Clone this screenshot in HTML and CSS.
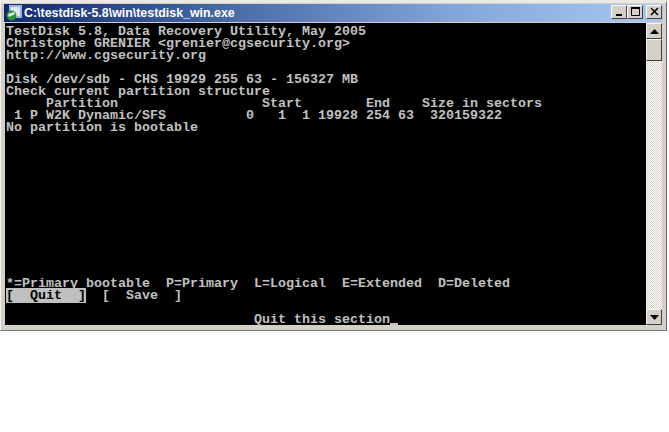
FILE: index.html
```html
<!DOCTYPE html>
<html>
<head>
<meta charset="utf-8">
<title>testdisk_win</title>
<link rel="stylesheet" href="styles.css">
</head>
<body>
<div class="window">
  <div class="titlebar">
    <svg class="appicon" width="16" height="16" viewBox="0 0 16 16">
      <rect x="3" y="0" width="13" height="13" fill="#9fb4cf"/>
      <rect x="5" y="2" width="9" height="9" fill="#dfe8f2"/>
      <circle cx="5.5" cy="10.5" r="5" fill="#2f8f3a"/>
      <path d="M2 9l6-2 1 2-6 3z" fill="#e8f3e0"/>
    </svg>
    <span class="title">C:\testdisk-5.8\win\testdisk_win.exe</span>
    <div class="controls">
      <button class="ctl"><svg width="13" height="12" viewBox="0 0 13 12"><rect x="3" y="8" width="6" height="2" fill="#000"/></svg></button>
      <button class="ctl"><svg width="13" height="12" viewBox="0 0 13 12"><path d="M2.5 1.5h8v8h-8z" fill="none" stroke="#000"/><rect x="2" y="1" width="9" height="2" fill="#000"/></svg></button>
      <button class="ctl close"><svg width="13" height="12" viewBox="0 0 13 12"><path d="M3 2l7 7M10 2l-7 7" stroke="#000" stroke-width="1.6" fill="none"/></svg></button>
    </div>
  </div>
  <div class="client">
<pre class="console">TestDisk 5.8, Data Recovery Utility, May 2005
Christophe GRENIER &lt;grenier@cgsecurity.org&gt;
http://www.cgsecurity.org

Disk /dev/sdb - CHS 19929 255 63 - 156327 MB
Check current partition structure
     Partition                  Start        End    Size in sectors
 1 P W2K Dynamic/SFS          0   1  1 19928 254 63  320159322
No partition is bootable












*=Primary bootable  P=Primary  L=Logical  E=Extended  D=Deleted
<span class="selected">[  Quit  ]</span>  [  Save  ]

                               Quit this section<span class="cursor"></span></pre>
    <div class="scrollbar">
      <div class="arrow"><svg width="9" height="5" viewBox="0 0 9 5"><path d="M4.5 0L9 5H0z" fill="#000"/></svg></div>
      <div class="thumb"></div>
      <div class="track"></div>
      <div class="arrow"><svg width="9" height="5" viewBox="0 0 9 5"><path d="M0 0h9L4.5 5z" fill="#000"/></svg></div>
    </div>
  </div>
</div>
</body>
</html>
```
FILE: styles.css
```css
html, body {
  margin: 0;
  padding: 0;
  background: #fff;
  width: 669px;
  height: 432px;
  overflow: hidden;
}
.window {
  width: 667px;
  height: 331px;
  box-sizing: border-box;
  background: #d4d0c8;
  border-top: 3px solid #ece9e2;
  border-left: 1px solid #f4f3ee;
  border-right: 1px solid #666;
  border-bottom: 1px solid #777;
  padding: 1px 3px 5px 3px;
  display: flex;
  flex-direction: column;
}
.titlebar {
  height: 18px;
  flex: none;
  display: flex;
  align-items: center;
  padding-left: 2px;
  background: linear-gradient(90deg, #12296e 0%, #4a6ca8 35%, #85a8dc 70%, #a9c8f0 100%);
}
.appicon {
  flex: none;
}
.title {
  margin-left: 2px;
  color: #fff;
  font: 700 12.4px "Liberation Sans", Arial, sans-serif;
  white-space: nowrap;
}
.controls {
  margin-left: auto;
  margin-bottom: 2px;
  display: flex;
  padding-right: 1px;
}
.ctl {
  width: 16px;
  height: 14px;
  padding: 0;
  margin: 0;
  background: #d4d0c8;
  border: 1px solid;
  border-color: #fff #404040 #404040 #fff;
  display: flex;
  align-items: center;
  justify-content: center;
}
.close {
  margin-left: 3px;
}
.client {
  flex: 1;
  display: flex;
  min-height: 0;
  margin: 1px 1px 0;
}
.console {
  margin: 0;
  flex: 1;
  padding: 3px 0 0 1px;
  background: #000;
  color: #c0c0c0;
  font: 700 13.33px/12px "Liberation Mono", "Courier New", monospace;
  white-space: pre;
}
.selected {
  background: #c0c0c0;
  color: #000;
}
.cursor {
  display: inline-block;
  width: 8px;
  height: 2px;
  vertical-align: -2px;
  background: #c0c0c0;
}
.scrollbar {
  flex: none;
  width: 16px;
  display: flex;
  flex-direction: column;
  background-color: #eeedea;
  background-image: repeating-conic-gradient(#d4d0c8 0 25%, #fff 0 50%);
  background-size: 2px 2px;
}
.arrow, .thumb {
  flex: none;
  box-sizing: border-box;
  background: #d4d0c8;
  border: 1px solid;
  border-color: #f4f3ee #404040 #404040 #f4f3ee;
}
.arrow {
  height: 16px;
  display: flex;
  align-items: center;
  justify-content: center;
}
.thumb {
  height: 22px;
}
.track {
  flex: 1;
}
```
